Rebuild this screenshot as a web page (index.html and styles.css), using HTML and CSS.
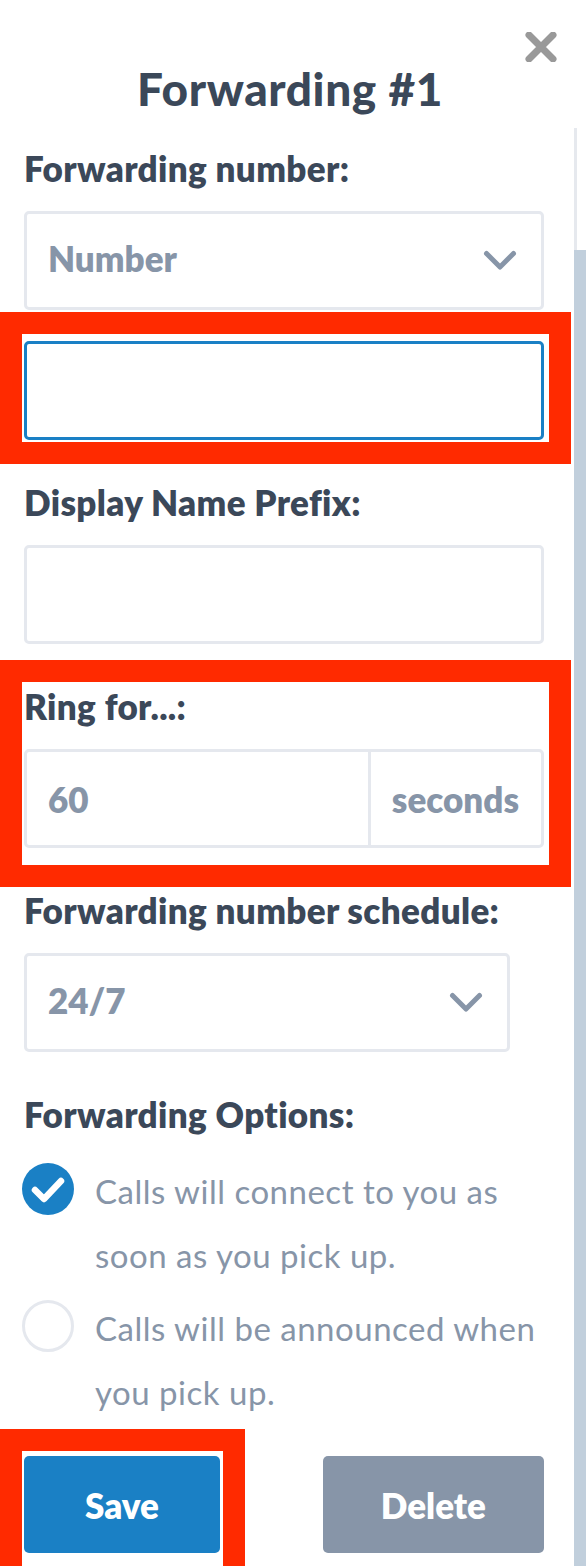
FILE: index.html
```html
<!DOCTYPE html>
<html>
<head>
    <title>Forwarding #1</title>
<link rel="stylesheet" href="styles.css">
</head>
<body>
<div class="page">
    <div class="panel">
        <div class="close-row">
            <button class="close" type="button" aria-label="Close">
                <svg width="32" height="30" viewBox="0 0 32 30"><path d="M4 3 L28 27 M28 3 L4 27" stroke="#999999" stroke-width="7" stroke-linecap="round"/></svg>
            </button>
        </div>
        <h1 class="title">Forwarding #1</h1>

        <form class="form">
            <div class="field">
                <label class="label">Forwarding number:</label>
                <div class="select">
                    <span class="select-value">Number</span>
                    <svg class="chevron" width="34" height="21" viewBox="0 0 34 21"><polyline points="3.5,3.5 17,17 30.5,3.5" fill="none" stroke="#8795a8" stroke-width="5" stroke-linecap="round" stroke-linejoin="round"/></svg>
                </div>
                <div class="mark mark-number">
                    <input class="text-input focused" type="text">
                </div>
            </div>

            <div class="field">
                <label class="label">Display Name Prefix:</label>
                <input class="text-input" type="text">
            </div>

            <div class="field mark mark-ring">
                <label class="label">Ring for...:</label>
                <div class="input-group">
                    <span class="group-value">60</span>
                    <span class="addon">seconds</span>
                </div>
            </div>

            <div class="field">
                <label class="label">Forwarding number schedule:</label>
                <div class="select select-short">
                    <span class="select-value">24/7</span>
                    <svg class="chevron" width="34" height="21" viewBox="0 0 34 21"><polyline points="3.5,3.5 17,17 30.5,3.5" fill="none" stroke="#8795a8" stroke-width="5" stroke-linecap="round" stroke-linejoin="round"/></svg>
                </div>
            </div>

            <div class="field options">
                <label class="label">Forwarding Options:</label>
                <div class="option">
                    <svg class="radio" width="52" height="52" viewBox="0 0 52 52"><circle cx="26" cy="26" r="26" fill="#1a80c5"/><polyline points="13,27 22,36 39,18" fill="none" stroke="#ffffff" stroke-width="6.5" stroke-linecap="round" stroke-linejoin="round"/></svg>
                    <span class="option-text">Calls will connect to you as soon as you pick up.</span>
                </div>
                <div class="option">
                    <svg class="radio" width="52" height="52" viewBox="0 0 52 52"><circle cx="26" cy="26" r="24.5" fill="#ffffff" stroke="#e5e8ee" stroke-width="3"/></svg>
                    <span class="option-text">Calls will be announced when you pick up.</span>
                </div>
            </div>

            <div class="buttons">
                <div class="mark mark-save">
                    <button class="btn btn-save" type="button">Save</button>
                </div>
                <button class="btn btn-delete" type="button">Delete</button>
            </div>
        </form>
    </div>

    <div class="scrollbar">
        <div class="track"></div>
        <div class="thumb"></div>
    </div>
</div>
</body>
</html>
```

FILE: styles.css
```css
body {
  margin: 0;
  background: #ffffff;
  font-family: Lato, "Open Sans", sans-serif;
  color: #3b4859;
}

.page {
  display: flex;
  height: 1566px;
  overflow: hidden;
}

.panel {
  width: 574px;
  flex: none;
}

.close-row {
  display: flex;
  justify-content: flex-end;
  padding: 32px 17px 0 0;
  height: 29px;
}

.close {
  border: none;
  background: none;
  padding: 0;
  height: 30px;
}

.title {
  margin: 0;
  text-align: center;
  font-size: 46px;
  line-height: 56px;
  font-weight: 900;
  letter-spacing: 0.6px;
  padding-left: 6px;
}

.form {
  padding: 30px 30px 0 24px;
}

.field {
  margin-bottom: 41px;
}

.label {
  display: block;
  font-size: 35px;
  line-height: 42px;
  font-weight: 800;
  letter-spacing: 0.35px;
  margin-bottom: 22px;
}

.select {
  box-sizing: border-box;
  height: 99px;
  border: 3px solid #e5e8ee;
  border-radius: 5px;
  display: flex;
  align-items: center;
  justify-content: space-between;
  padding: 0 24px 5px 21px;
}

.select .chevron {
  margin-top: 5px;
}

.select-short {
  width: 486px;
}

.select-value,
.group-value,
.addon {
  font-size: 35px;
  font-weight: 800;
  color: #8795a8;
}

.chevron {
  display: block;
}

.mark {
  position: relative;
}

.mark::after {
  content: "";
  position: absolute;
  border: 22px solid #ff2a00;
  pointer-events: none;
}

.mark-number {
  margin-top: 31px;
}

.mark-number::after {
  top: -29px;
  left: -24px;
  right: -27px;
  bottom: -24px;
}

.mark-ring::after {
  top: -25px;
  left: -24px;
  right: -27px;
  bottom: -39px;
}

.mark-save::after {
  top: -27px;
  left: -24px;
  right: -25px;
  bottom: -60px;
}

.text-input {
  display: block;
  box-sizing: border-box;
  width: 100%;
  height: 99px;
  border: 3px solid #e5e8ee;
  border-radius: 5px;
  outline: none;
  font-family: inherit;
  font-size: 33px;
}

.text-input.focused {
  border-color: #1a80c5;
}

.input-group {
  box-sizing: border-box;
  height: 99px;
  border: 3px solid #e5e8ee;
  border-radius: 5px;
  display: flex;
  align-items: stretch;
}

.group-value {
  flex: 1;
  display: flex;
  align-items: center;
  padding-left: 21px;
}

.addon {
  display: flex;
  align-items: center;
  border-left: 3px solid #e5e8ee;
  padding: 0 22px 0 21px;
}

.options {
  margin-bottom: 0;
}

.options .label {
  margin-bottom: 24px;
}

.option {
  display: flex;
  align-items: flex-start;
  gap: 21px;
  margin-left: -2px;
  margin-bottom: 9px;
}

.radio {
  flex: none;
  margin-top: 4px;
}

.option-text {
  font-size: 33px;
  line-height: 64px;
  color: #8795a8;
  letter-spacing: 0.5px;
}

.buttons {
  display: flex;
  justify-content: space-between;
  margin-top: 32px;
}

.btn {
  height: 97px;
  border: none;
  border-radius: 5px;
  padding: 0 61px;
  font-family: inherit;
  font-size: 35px;
  font-weight: 800;
  color: #ffffff;
}

.btn-save {
  display: block;
  background: #1a80c5;
}

.btn-delete {
  background: #8795a8;
  padding: 0 58px;
}

.scrollbar {
  width: 12px;
  flex: none;
  display: flex;
  flex-direction: column;
  padding-top: 128px;
}

.track {
  width: 3px;
  height: 122px;
  background: #e6e9ee;
}

.thumb {
  flex: 1;
  background: #c1cfdc;
}
```
